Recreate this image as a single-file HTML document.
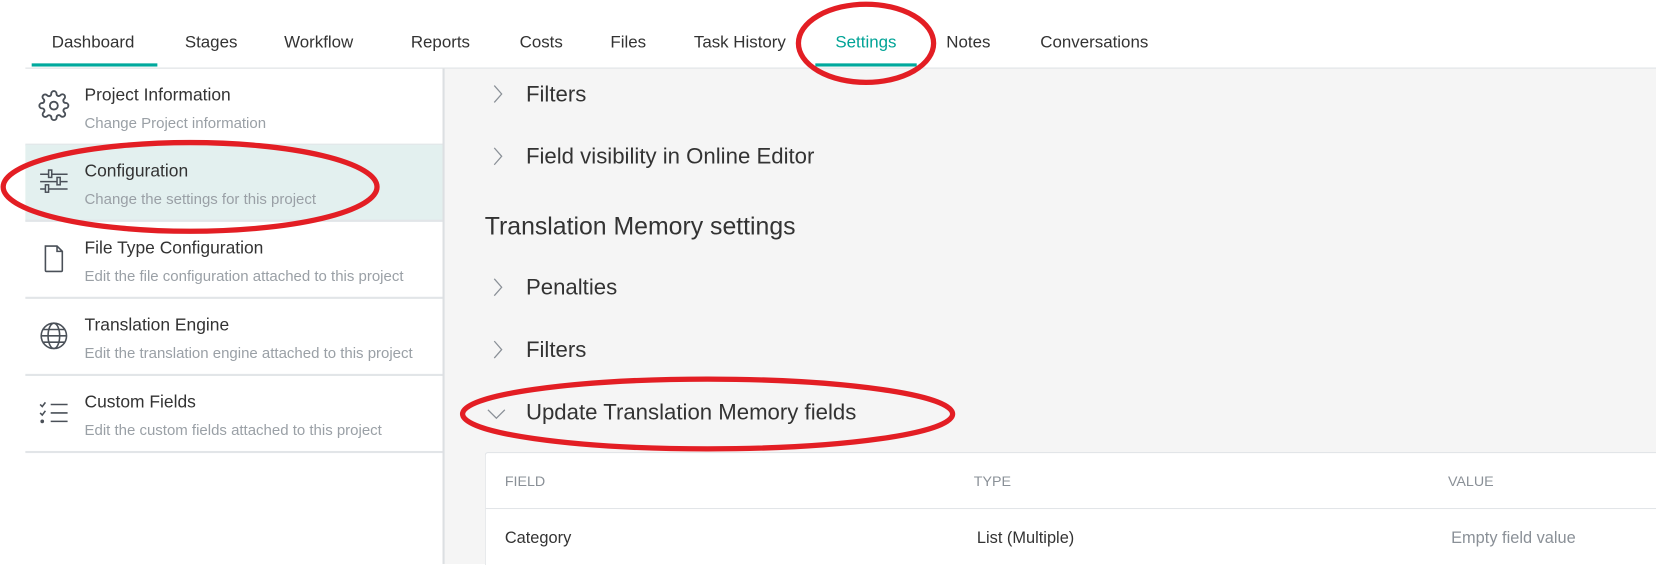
<!DOCTYPE html>
<html><head><meta charset="utf-8"><style>
html,body{margin:0;padding:0;width:1656px;height:564px;overflow:hidden;background:#fff}
#w{position:absolute;left:0;top:0;width:1568px;height:534px;transform:scale(1.05612);transform-origin:0 0;font-family:"Liberation Sans",sans-serif;color:#333}
.a{position:absolute;white-space:nowrap}
.tab{position:absolute;top:32px;font-size:16px;color:#333}
.item{position:absolute;left:24px;width:395px;height:71px;border-bottom:2px solid #e2e5e8}
.t{position:absolute;left:56px;top:16px;font-size:16.5px;color:#333}
.s{position:absolute;left:56px;top:44px;font-size:14.2px;color:#9aa0a6}
.ic{position:absolute;left:12px;top:20px}
.h{position:absolute;left:498px;font-size:21px;color:#333}
.ch{position:absolute;left:464px}
</style></head><body><div id="w">
<div class="tab" style="left:49px">Dashboard</div>
<div class="tab" style="left:175px">Stages</div>
<div class="tab" style="left:269px">Workflow</div>
<div class="tab" style="left:389px">Reports</div>
<div class="tab" style="left:492px">Costs</div>
<div class="tab" style="left:578px">Files</div>
<div class="tab" style="left:657px">Task History</div>
<div class="tab" style="left:791px;color:#00a396">Settings</div>
<div class="tab" style="left:896px">Notes</div>
<div class="tab" style="left:985px">Conversations</div>
<div class="a" style="left:30px;top:60px;width:119px;height:3px;background:#00a99d"></div>
<div class="a" style="left:772px;top:60px;width:96px;height:3px;background:#00a99d"></div>
<div class="a" style="left:24px;top:64px;width:1544px;height:1px;background:#dcdfe2"></div>
<div class="a" style="left:421px;top:65px;width:1147px;height:469px;background:#f5f5f5"></div>
<div class="a" style="left:419px;top:65px;width:2px;height:469px;background:#dcdfe2"></div>

<div class="item" style="top:65px"><svg class="ic" width="30" height="30" viewBox="0 0 24 24" fill="none" stroke="#4a5058" stroke-width="1.4"><circle cx="12" cy="12" r="3"/><path d="M19.4 15a1.7 1.7 0 0 0 .3 1.8l.1.1a2 2 0 1 1-2.8 2.8l-.1-.1a1.7 1.7 0 0 0-1.8-.3 1.7 1.7 0 0 0-1 1.5V21a2 2 0 1 1-4 0v-.1a1.7 1.7 0 0 0-1.1-1.5 1.7 1.7 0 0 0-1.8.3l-.1.1a2 2 0 1 1-2.8-2.8l.1-.1a1.7 1.7 0 0 0 .3-1.8 1.7 1.7 0 0 0-1.5-1H3a2 2 0 1 1 0-4h.1a1.7 1.7 0 0 0 1.5-1.1 1.7 1.7 0 0 0-.3-1.8l-.1-.1a2 2 0 1 1 2.8-2.8l.1.1a1.7 1.7 0 0 0 1.8.3H9a1.7 1.7 0 0 0 1-1.5V3a2 2 0 1 1 4 0v.1a1.7 1.7 0 0 0 1 1.5 1.7 1.7 0 0 0 1.8-.3l.1-.1a2 2 0 1 1 2.8 2.8l-.1.1a1.7 1.7 0 0 0-.3 1.8V9a1.7 1.7 0 0 0 1.5 1H21a2 2 0 1 1 0 4h-.1a1.7 1.7 0 0 0-1.5 1z"/></svg><div class="t">Project Information</div><div class="s">Change Project information</div></div>
<div class="item" style="top:137px;background:#e3f0ef"><svg class="ic" width="30" height="30" viewBox="0 0 30 30" fill="none" stroke="#4a5058" stroke-width="1.4"><path d="M2 8h26M2 15h26M2 22h26"/><rect x="10" y="4" width="3" height="7" fill="#e3f0ef"/><rect x="18" y="11" width="3" height="7" fill="#e3f0ef"/><rect x="7" y="18" width="3" height="7" fill="#e3f0ef"/></svg><div class="t">Configuration</div><div class="s">Change the settings for this project</div></div>
<div class="item" style="top:210px"><svg class="ic" width="30" height="30" viewBox="0 0 30 30" fill="none" stroke="#4a5058" stroke-width="1.5"><path d="M7 3h11l5 5v18a1 1 0 0 1-1 1H8a1 1 0 0 1-1-1z M18 3v5h5"/></svg><div class="t">File Type Configuration</div><div class="s">Edit the file configuration attached to this project</div></div>
<div class="item" style="top:283px"><svg class="ic" width="30" height="30" viewBox="0 0 30 30" fill="none" stroke="#4a5058" stroke-width="1.5"><circle cx="15" cy="15" r="12"/><ellipse cx="15" cy="15" rx="5.5" ry="12"/><path d="M3 15h24M5 9h20M5 21h20"/></svg><div class="t">Translation Engine</div><div class="s">Edit the translation engine attached to this project</div></div>
<div class="item" style="top:356px"><svg class="ic" width="30" height="30" viewBox="0 0 30 30" fill="none" stroke="#4a5058" stroke-width="1.5"><path d="M2 7l2 2 3-4M2 15l2 2 3-4M12 7h16M12 15h16M12 23h16"/><circle cx="4" cy="23" r="1" fill="#4a5058"/></svg><div class="t">Custom Fields</div><div class="s">Edit the custom fields attached to this project</div></div>

<svg class="ch" style="top:79px" width="14" height="20" viewBox="0 0 14 20"><path d="M4 2l7 8-7 8" fill="none" stroke="#8a9097" stroke-width="1.2"/></svg>
<div class="h" style="top:78px">Filters</div>
<svg class="ch" style="top:138px" width="14" height="20" viewBox="0 0 14 20"><path d="M4 2l7 8-7 8" fill="none" stroke="#8a9097" stroke-width="1.2"/></svg>
<div class="h" style="top:137px">Field visibility in Online Editor</div>
<div class="a" style="left:459px;top:201px;font-size:23.5px">Translation Memory settings</div>
<svg class="ch" style="top:262px" width="14" height="20" viewBox="0 0 14 20"><path d="M4 2l7 8-7 8" fill="none" stroke="#8a9097" stroke-width="1.2"/></svg>
<div class="h" style="top:261px">Penalties</div>
<svg class="ch" style="top:321px" width="14" height="20" viewBox="0 0 14 20"><path d="M4 2l7 8-7 8" fill="none" stroke="#8a9097" stroke-width="1.2"/></svg>
<div class="h" style="top:320px">Filters</div>
<svg class="a" style="left:460px;top:385px" width="20" height="14" viewBox="0 0 20 14"><path d="M2 3l8 8 8-8" fill="none" stroke="#8a9097" stroke-width="1.2"/></svg>
<div class="h" style="top:379px">Update Translation Memory fields</div>

<div class="a" style="left:459px;top:428px;width:1109px;height:106px;background:#fff;border:1px solid #e2e5e8;border-right:none;border-bottom:none;border-radius:3px 0 0 0"></div>
<div class="a" style="left:460px;top:481px;width:1108px;height:1px;background:#e2e5e8"></div>
<div class="a" style="left:478px;top:448px;font-size:13.5px;color:#8a9097">FIELD</div>
<div class="a" style="left:922px;top:448px;font-size:13.5px;color:#8a9097">TYPE</div>
<div class="a" style="left:1371px;top:448px;font-size:13.5px;color:#8a9097">VALUE</div>
<div class="a" style="left:478px;top:501px;font-size:15.5px">Category</div>
<div class="a" style="left:925px;top:501px;font-size:15.5px">List (Multiple)</div>
<div class="a" style="left:1374px;top:501px;font-size:15.5px;color:#8a9097">Empty field value</div>

<svg class="a" style="left:0;top:0" width="1568" height="534"><g fill="none" stroke="#e31e24" stroke-width="5"><ellipse cx="820" cy="41" rx="64" ry="37"/><ellipse cx="180" cy="177" rx="177" ry="42"/><ellipse cx="670" cy="392" rx="232" ry="33"/></g></svg>
</div></body></html>
